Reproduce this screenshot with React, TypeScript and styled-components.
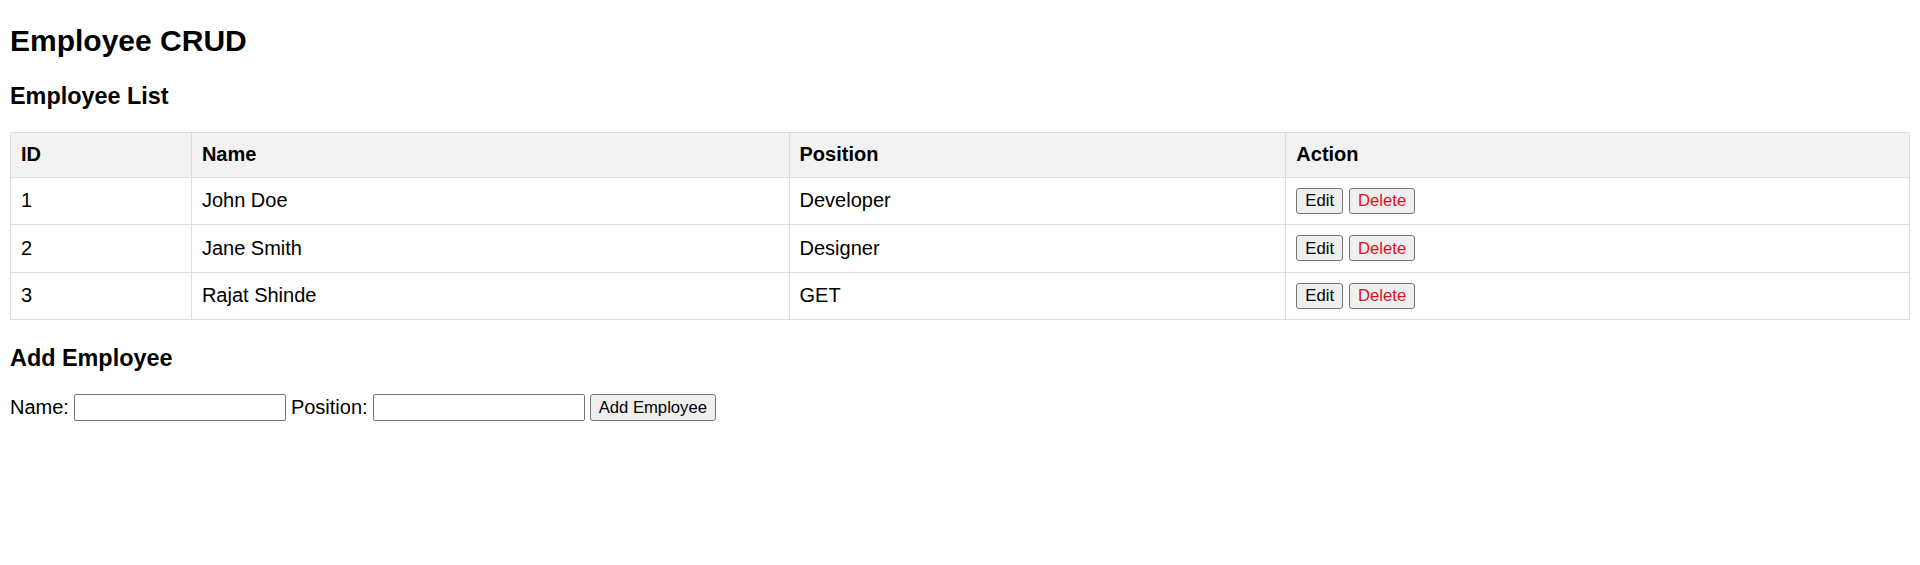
import React from "react";
import styled, { createGlobalStyle } from "styled-components";

const GlobalStyle = createGlobalStyle`
  html, body { background: #ffffff; }
  body {
    margin: 10px;
    font-family: "Liberation Sans", Arial, sans-serif;
    color: #000000;
  }
`;

const Page = styled.div`
  font-family: "Liberation Sans", Arial, sans-serif;
  font-size: 20px;
`;

const Title = styled.h1`
  font-size: 30px;
  font-weight: bold;
  margin: 14px 0 24px 0;
  line-height: 34.5px;
`;

const SectionTitle = styled.h2<{ $top?: number; $bottom?: number }>`
  font-size: 23.4px;
  font-weight: bold;
  line-height: 27px;
  margin: ${(p) => p.$top ?? 24}px 0 ${(p) => p.$bottom ?? 24}px 0;
`;

const Table = styled.table`
  width: 100%;
  border-collapse: collapse;
  table-layout: fixed;
  font-size: 20px;
`;

const HeadCell = styled.th<{ $w: number }>`
  width: ${(p) => p.$w}%;
  box-sizing: border-box;
  background: #f2f2f2;
  border: 1px solid #dddddd;
  padding: 10px;
  text-align: left;
  font-weight: bold;
  line-height: 23px;
  height: 45px;
`;

const Cell = styled.td`
  border: 1px solid #dddddd;
  padding: 10px;
  text-align: left;
  line-height: 23px;
  height: 26.5px;
  vertical-align: middle;
`;

const Button = styled.button<{ $danger?: boolean; $tall?: boolean }>`
  font-family: "Liberation Sans", Arial, sans-serif;
  font-size: 16.67px;
  line-height: 19px;
  height: ${(p) => (p.$tall ? 27 : 26)}px;
  padding: 2px 8px;
  margin: 0;
  background: #efefef;
  color: ${(p) => (p.$danger ? "#e0101a" : "#000000")};
  border: 1px solid #767676;
  border-radius: 3px;
  vertical-align: middle;
  box-sizing: border-box;
`;

const Gap = styled.span`
  display: inline-block;
  width: 6px;
`;

const Form = styled.form`
  display: flex;
  align-items: center;
  font-size: 20px;
  line-height: 23px;
`;

const Label = styled.label`
  margin-right: 5px;
`;

const Input = styled.input`
  width: 212px;
  height: 27px;
  box-sizing: border-box;
  border: 1px solid #767676;
  border-radius: 2px;
  padding: 1px 3px;
  margin: 0 5px 0 0;
  font-family: "Liberation Sans", Arial, sans-serif;
  font-size: 16.67px;
  background: #ffffff;
`;

const employees = [
  { id: 1, name: "John Doe", position: "Developer" },
  { id: 2, name: "Jane Smith", position: "Designer" },
  { id: 3, name: "Rajat Shinde", position: "GET" },
];

export default function App() {
  return (
    <Page>
      <GlobalStyle />
      <Title>Employee CRUD</Title>
      <SectionTitle $top={24} $bottom={22}>Employee List</SectionTitle>
      <Table>
        <thead>
          <tr>
            <HeadCell $w={9.526}>ID</HeadCell>
            <HeadCell $w={31.47}>Name</HeadCell>
            <HeadCell $w={26.16}>Position</HeadCell>
            <HeadCell $w={32.84}>Action</HeadCell>
          </tr>
        </thead>
        <tbody>
          {employees.map((e) => (
            <tr key={e.id}>
              <Cell>{e.id}</Cell>
              <Cell>{e.name}</Cell>
              <Cell>{e.position}</Cell>
              <Cell>
                <Button type="button">Edit</Button>
                <Gap />
                <Button type="button" $danger>
                  Delete
                </Button>
              </Cell>
            </tr>
          ))}
        </tbody>
      </Table>
      <SectionTitle $top={25} $bottom={22}>Add Employee</SectionTitle>
      <Form onSubmit={(ev) => ev.preventDefault()}>
        <Label>Name:</Label>
        <Input type="text" />
        <Label>Position:</Label>
        <Input type="text" />
        <Button type="submit" $tall>
          Add Employee
        </Button>
      </Form>
    </Page>
  );
}
